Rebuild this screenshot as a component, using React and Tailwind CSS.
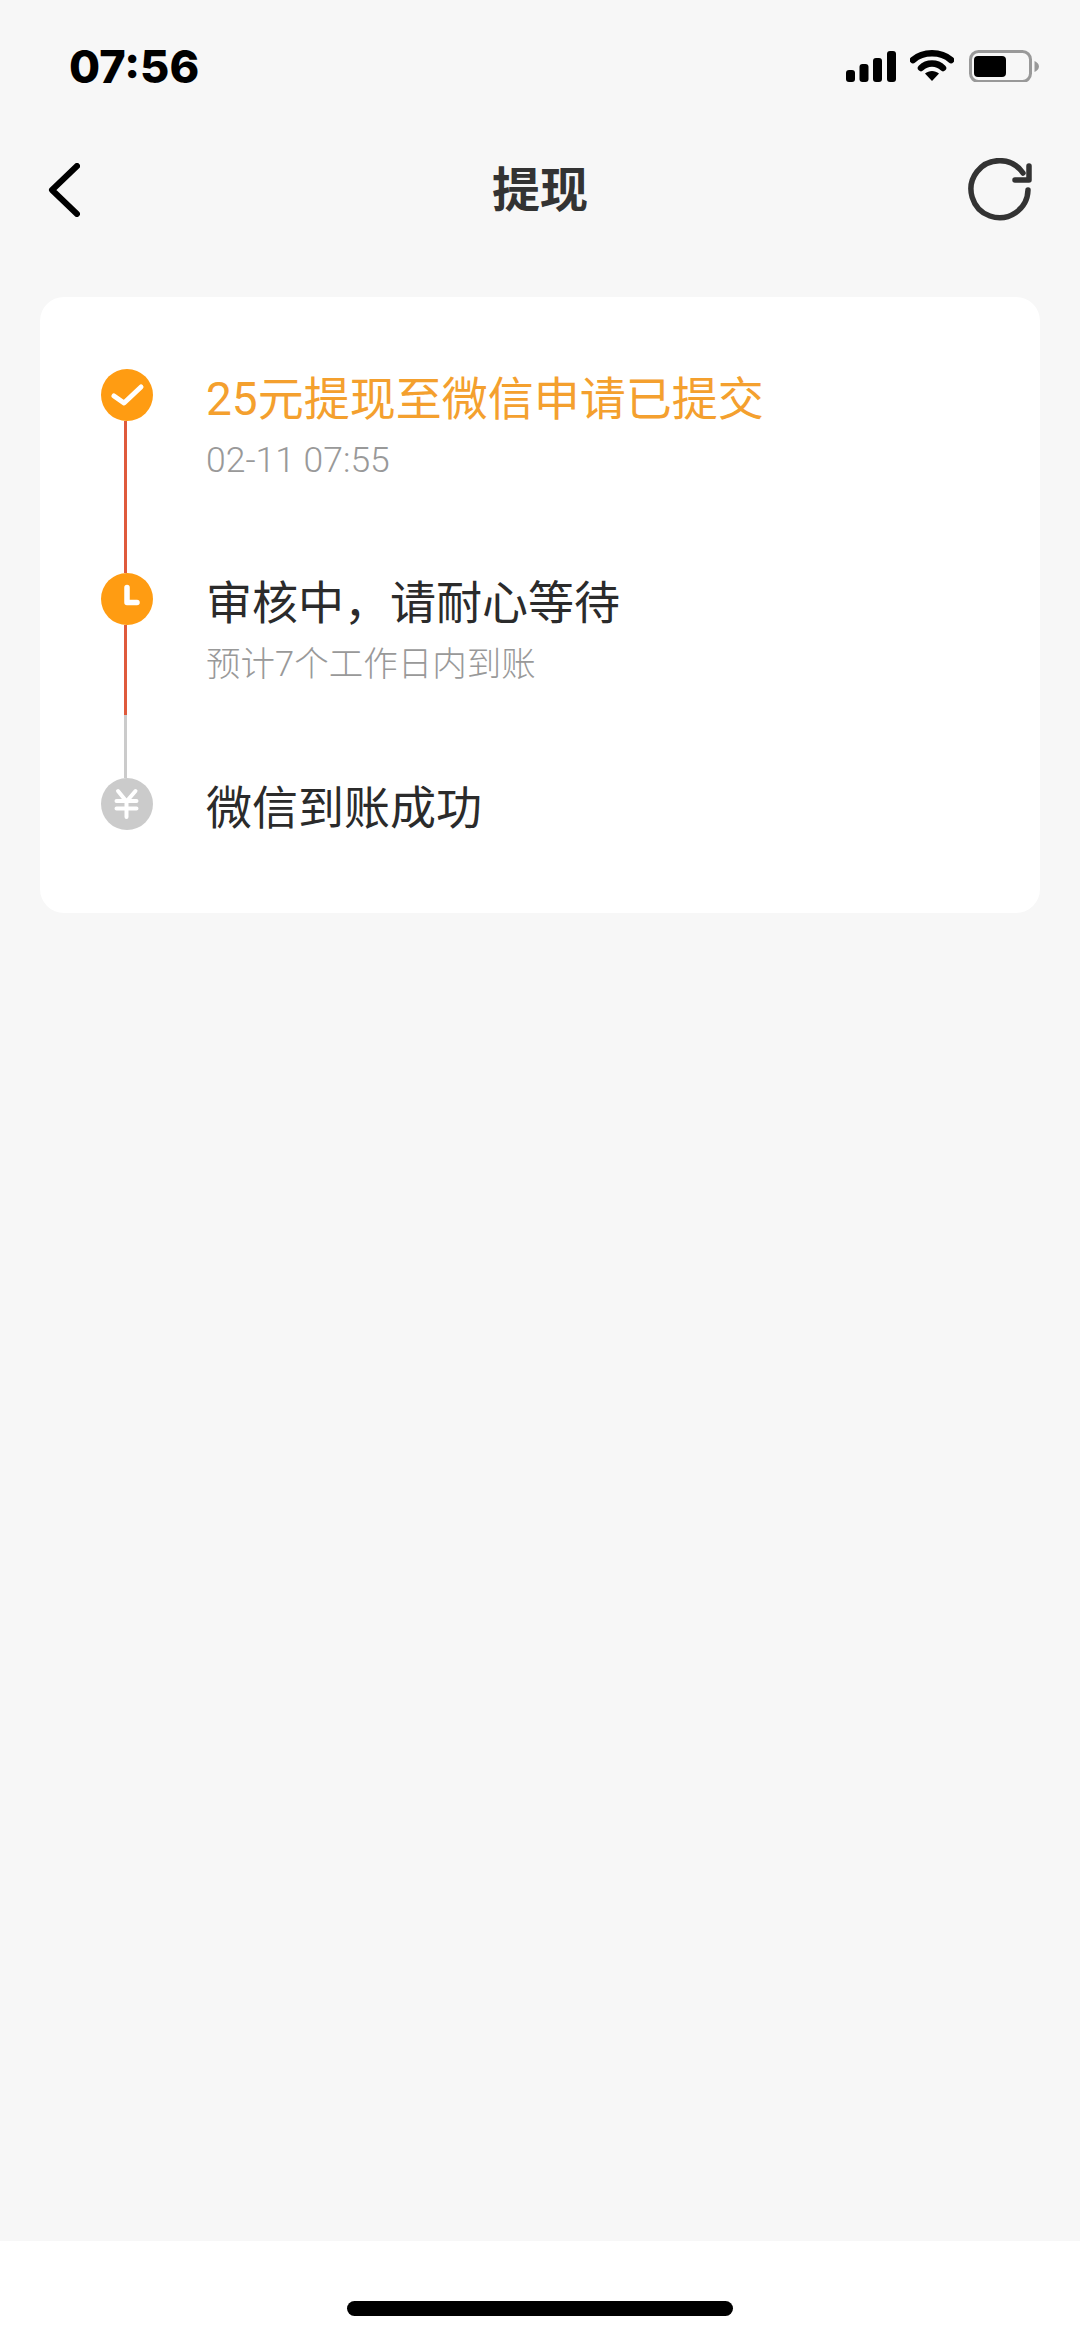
const FONT = "font-['Roboto','Noto_Sans_CJK_SC',sans-serif]";

const CheckIcon = () => (
  <svg width="52" height="52" viewBox="0 0 52 52" fill="none">
    <circle cx="26" cy="26" r="26" fill="#ff9c12" />
    <path d="M13 27l10 7 17-16" stroke="#fff" strokeWidth="5" strokeLinecap="round" strokeLinejoin="round" />
  </svg>
);

const ClockIcon = () => (
  <svg width="52" height="52" viewBox="0 0 52 52" fill="none">
    <circle cx="26" cy="26" r="26" fill="#ff9c12" />
    <path d="M26 14.5V29.5H36" stroke="#fff" strokeWidth="5.5" strokeLinecap="round" strokeLinejoin="round" />
  </svg>
);

const YenIcon = () => (
  <svg width="52" height="52" viewBox="0 0 52 52" fill="none">
    <circle cx="26" cy="26" r="26" fill="#cbcbcb" />
    <path d="M17 13l8.5 10.5L34.500 13M15.500 23H35.500M15.500 30.500H35.500M25.500 23.500V39" stroke="#fff" strokeWidth="4" strokeLinecap="round" strokeLinejoin="round" />
  </svg>
);

const StatusIcons = () => (
  <div className="flex items-center">
    <svg width="50" height="32" viewBox="0 0 50 32" fill="#000">
      <rect x="0" y="20" width="9" height="12" rx="3" />
      <rect x="13.500" y="14" width="9" height="18" rx="3" />
      <rect x="27" y="8" width="9" height="24" rx="3" />
      <rect x="41" y="1" width="9" height="31" rx="3" />
    </svg>
    <svg className="ml-[14px]" width="44" height="32" viewBox="0 0 44 32" fill="none">
      <path d="M3 10C13 1 31 1 41 10" stroke="#000" strokeWidth="6.500" strokeLinecap="round" />
      <path d="M11 18C17 12 27 12 33 18" stroke="#000" strokeWidth="6.500" strokeLinecap="round" />
      <path d="M15 23.500C19 20 25 20 29 23.500L22 31Z" fill="#000" />
    </svg>
    <svg className="ml-[15px]" width="70" height="32" viewBox="0 0 70 32" fill="none">
      <rect x="1.500" y="1.500" width="60" height="30" rx="8" stroke="#999" strokeWidth="3" />
      <rect x="5" y="6" width="32" height="21" rx="4" fill="#000" />
      <path d="M65.500 11C68 12 70 14 70 16.500C70 19 68 21 65.500 22Z" fill="#999" />
    </svg>
  </div>
);

const BackIcon = () => (
  <svg width="32" height="54" viewBox="0 0 32 54" fill="none">
    <path d="M29 3L4 27L29 51" stroke="#000" strokeWidth="6" strokeLinecap="round" strokeLinejoin="round" />
  </svg>
);

const RefreshIcon = () => (
  <svg width="64" height="64" viewBox="0 0 64 64" fill="none">
    <path d="M60 32A28.500 28.500 0 1 1 55 15" stroke="#333" strokeWidth="5.500" strokeLinecap="round" />
    <path d="M61 8V22H47" stroke="#333" strokeWidth="5.500" strokeLinecap="round" strokeLinejoin="round" />
  </svg>
);

const steps = [
  {
    icon: <CheckIcon />,
    title: "25元提现至微信申请已提交",
    sub: "02-11 07:55",
    subClass: "text-[35.5px]",
    titleClass: "text-[#f4a02e]",
    rowClass: "h-[204px]",
    line: <div className="w-[3px] mr-[3px] flex-1 bg-[#df5a3c]" />,
  },
  {
    icon: <ClockIcon />,
    title: "审核中，请耐心等待",
    sub: "预计7个工作日内到账",
    subClass: "text-[34.5px]",
    titleClass: "text-[#2b2b2b]",
    rowClass: "h-[205px]",
    line: (
      <>
        <div className="w-[3px] mr-[3px] h-[90px] bg-[#df5a3c]" />
        <div className="w-[3px] mr-[3px] flex-1 bg-[#cbcbcb]" />
      </>
    ),
  },
  {
    icon: <YenIcon />,
    title: "微信到账成功",
    titleClass: "text-[#2b2b2b]",
    rowClass: "h-[52px]",
  },
];

export default function App() {
  return (
    <div className={`${FONT} flex flex-col min-h-[2339px] bg-[#f7f7f7]`}>
      {/* status bar */}
      <div className="h-[132px] pl-[69px] pr-[41px] flex items-center justify-between">
        <span className="font-['Inter',sans-serif] font-extrabold text-[45px] leading-none text-black">07:56</span>
        <StatusIcons />
      </div>

      {/* header */}
      <div className="h-[116px] pl-[48px] pr-[48px] flex items-center justify-between">
        <div className="w-[64px]">
          <BackIcon />
        </div>
        <h1 className="pt-[2px] font-bold text-[48px] leading-none text-[#333]">提现</h1>
        <RefreshIcon />
      </div>

      {/* timeline */}
      <div className="flex-1">
        <div className="mt-[49px] mx-[40px] pt-[72px] pb-[83px] pl-[61px] bg-white rounded-[24px]">
          {steps.map((step, i) => (
            <div key={i} className={`flex ${step.rowClass}`}>
              <div className="w-[52px] flex flex-col items-center">
                {step.icon}
                {step.line}
              </div>
              <div className="ml-[53px] pt-[2px]">
                <div className={`text-[46px] leading-[56px] whitespace-nowrap ${step.titleClass}`}>{step.title}</div>
                {step.sub && (
                  <div className={`mt-[13px] leading-[40px] font-light whitespace-nowrap text-[#999] ${step.subClass}`}>{step.sub}</div>
                )}
              </div>
            </div>
          ))}
        </div>
      </div>

      {/* home indicator */}
      <div className="h-[98px] pt-[60px] bg-white">
        <div className="mx-auto w-[386px] h-[15px] rounded-full bg-black" />
      </div>
    </div>
  );
}
